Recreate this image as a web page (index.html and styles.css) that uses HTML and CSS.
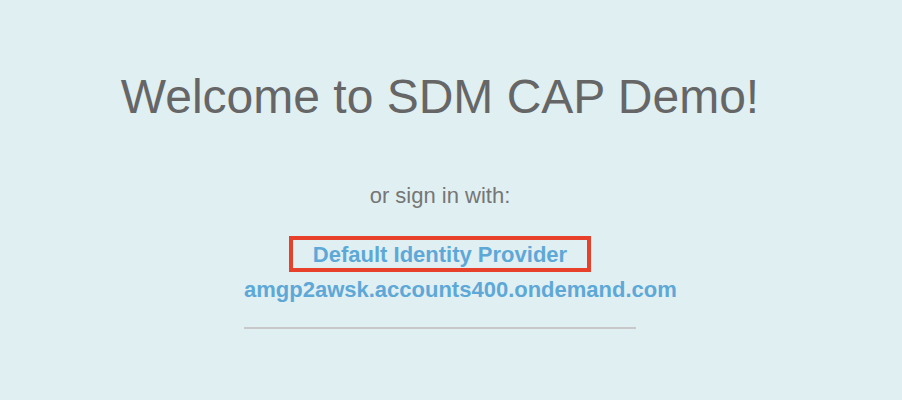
FILE: index.html
```html
<!DOCTYPE html>
<html>
<head>
<meta charset="utf-8">
<link rel="stylesheet" href="styles.css">
</head>
<body>
<main class="page">
  <h1 class="title">Welcome to SDM CAP Demo!</h1>
  <div class="login">
    <p class="hint">or sign in with:</p>
    <div class="providers">
      <a class="provider highlighted" href="#">Default Identity Provider</a>
      <a class="provider secondary" href="#">amgp2awsk.accounts400.ondemand.com</a>
    </div>
    <hr class="divider">
  </div>
</main>
</body>
</html>
```
FILE: styles.css
```css
html, body {
  margin: 0;
  padding: 0;
  background: #e0eff1;
  font-family: "Liberation Sans", Arial, sans-serif;
}
.page {
  width: 880px;
  display: flex;
  flex-direction: column;
  align-items: center;
}
.title {
  margin: 69px 0 0 0;
  font-size: 48px;
  font-weight: normal;
  color: #666666;
  line-height: 56px;
  white-space: nowrap;
}
.login {
  width: 392px;
  text-align: center;
  margin-top: 58px;
}
.hint {
  margin: 0;
  font-size: 22px;
  line-height: 26px;
  color: #767676;
}
.providers {
  margin-top: 27px;
  display: flex;
  flex-direction: column;
  align-items: center;
}
.provider {
  display: block;
  color: #5ea8d8;
  font-weight: bold;
  font-size: 22px;
  line-height: 26px;
  text-decoration: none;
  white-space: nowrap;
}
.highlighted {
  border: 4px solid #e8412b;
  padding: 2px 20px 0 20px;
}
.secondary {
  align-self: stretch;
  margin-top: 5px;
}
.divider {
  border: none;
  border-top: 2px solid #c8c8c8;
  margin: 24px 0 0 0;
}
```
